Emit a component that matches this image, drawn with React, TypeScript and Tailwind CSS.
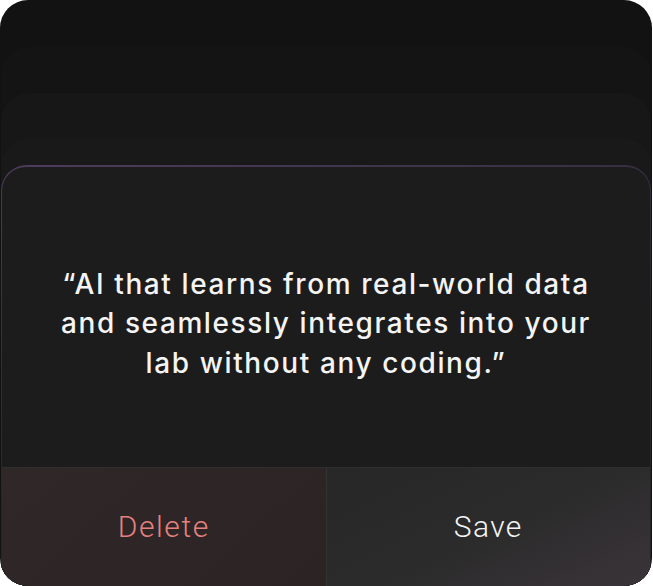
export default function App() {
  return (
    <div className="w-[653px] h-[586px] bg-white">
      <div className="w-[652px] h-[586px] rounded-[28px] overflow-hidden bg-[#121212] pt-[47px] flex flex-col">
        <div className="flex-1 flex flex-col rounded-t-[28px] bg-[#141414] pt-[46px] mx-[1px]">
          <div className="flex-1 flex flex-col rounded-t-[28px] bg-[#171717] pt-[45px]">
            <div className="flex-1 flex flex-col rounded-t-[28px] bg-[#191919] pt-[27px]">
              <div className="flex-1 flex flex-col rounded-t-[26px] bg-[linear-gradient(165deg,#4d3c5e_0%,#332c3b_35%,#252427_60%)] pt-[2px] px-[1px]">
                <div className="flex-1 flex flex-col rounded-t-[24px] bg-[#1c1c1c] overflow-hidden">
                  <div className="h-[300px] flex items-center justify-center pt-[14px]">
                    <p className="text-center text-[28px] leading-[39.5px] font-medium text-[#f4f4f4] font-['Inter',sans-serif] tracking-[1.6px]">
                      “AI that learns from real-world data
                      <br />
                      and seamlessly integrates into your
                      <br />
                      lab without any coding.”
                    </p>
                  </div>
                  <div className="flex-1 flex border-t border-[#2f2f2f]">
                    <button className="flex-1 flex items-center justify-center bg-[linear-gradient(135deg,#2f2728,#2b2324)] border-r border-[#343434] text-[#e5817f] text-[30px] font-light font-['Roboto',sans-serif] tracking-[1.6px] pb-[2px]">
                      Delete
                    </button>
                    <button className="flex-1 flex items-center justify-center bg-[linear-gradient(155deg,#272727_0%,#2b2b2b_50%,#3a3439_100%)] text-[#f4f4f4] text-[30px] font-light font-['Roboto',sans-serif] tracking-[1.4px] pb-[2px]">
                      Save
                    </button>
                  </div>
                </div>
              </div>
            </div>
          </div>
        </div>
      </div>
    </div>
  );
}
